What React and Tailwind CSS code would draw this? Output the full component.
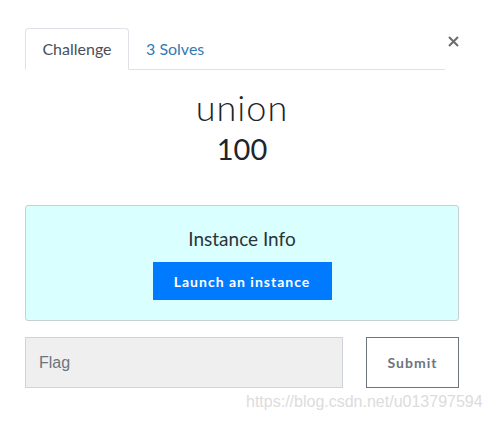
import React from 'react';

export default function App() {
  return (
    <div className="w-[490px] h-[421px] bg-white relative font-['Lato',sans-serif]">
      <div className="pl-[25px] pr-[31px] pt-[28px]">
        {/* tabs */}
        <div className="flex items-start">
          <div className="flex flex-1 border-b border-[#dee2e6] mr-[2px] h-[42px]">
            <div className="h-[42px] w-[104px] border border-[#dee2e6] border-b-white rounded-t-[4px] bg-white flex items-center justify-center text-[16px] text-[#495057] -mb-px">
              Challenge
            </div>
            <div className="h-[41px] flex items-center pl-[17px] text-[16px] text-[#337ab7]">
              3 Solves
            </div>
          </div>
          <button className="mt-[7px] w-[12px] h-[12px] flex items-center justify-center text-[#6c6c6c]">
            <svg width="11" height="11" viewBox="0 0 11 11">
              <path d="M1 1L10 10M10 1L1 10" stroke="currentColor" strokeWidth="2" />
            </svg>
          </button>
        </div>

        {/* title */}
        <div className="flex flex-col items-center mt-[16px]">
          <div className="text-[36px] font-light tracking-[1px] leading-[42px] text-[#212529]">union</div>
          <div className="text-[29px] font-normal leading-[34px] text-[#212529] mt-[4px]">100</div>
        </div>

        {/* instance */}
        <div className="mt-[39px] h-[116px] bg-[#d9ffff] border border-[#c6cfd1] rounded-[3px] flex flex-col items-center pt-[21px]">
          <div className="text-[19px] leading-[24px] text-[#2d3338]">Instance Info</div>
          <button className="mt-[11px] w-[179px] h-[38px] bg-[#007bff] text-white text-[14px] font-bold tracking-[1px]">
            Launch an instance
          </button>
        </div>

        {/* flag row */}
        <div className="flex mt-[16px] justify-between">
          <div className="w-[318px] h-[51px] bg-[#efefef] border border-[#ced4da] flex items-center pl-[13px] font-['Liberation_Sans',sans-serif] text-[16px] text-[#6c757d]">
            Flag
          </div>
          <button className="w-[93px] h-[51px] border border-[#6c757d] bg-white text-[14px] font-bold tracking-[1px] text-[#6c757d]">
            Submit
          </button>
        </div>
      </div>

      <div className="absolute left-[246px] top-[393px] font-['Liberation_Sans',sans-serif] text-[16px] leading-[18px] text-[#dcdcdc]">
        https://blog.csdn.net/u013797594
      </div>
    </div>
  );
}
